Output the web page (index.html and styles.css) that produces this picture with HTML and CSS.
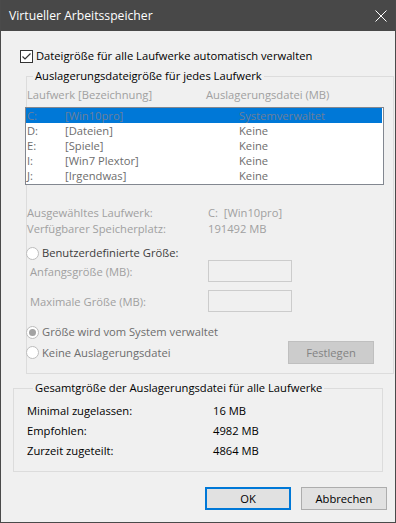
FILE: index.html
```html
<!DOCTYPE html>
<html lang="de">
<head>
<meta charset="UTF-8">
<title>Virtueller Arbeitsspeicher</title>
<link rel="stylesheet" href="styles.css">
</head>
<body>

<div class="window">
  <div class="titlebar">
    <span>Virtueller Arbeitsspeicher</span>
    <svg class="close" width="12" height="12" viewBox="0 0 12 12">
      <path d="M0.5 0.5 L11.5 11.5 M11.5 0.5 L0.5 11.5" stroke="#ffffff" stroke-width="1" fill="none"/>
    </svg>
  </div>

  <div class="content">
    <div class="check">
      <svg class="box" width="13" height="13" viewBox="0 0 13 13">
        <rect x="0.5" y="0.5" width="12" height="12" fill="#ffffff" stroke="#333333"/>
        <path d="M2.5 6.5 L5 9 L10.5 3.5" stroke="#333333" stroke-width="1.2" fill="none"/>
      </svg>
      <span>Dateigröße für alle Laufwerke automatisch verwalten</span>
    </div>

    <fieldset class="group paging">
      <legend>Auslagerungsdateigröße für jedes Laufwerk</legend>

      <div class="list-head">
        <span>Laufwerk [Bezeichnung]</span>
        <span>Auslagerungsdatei (MB)</span>
      </div>

      <div class="list">
        <div class="row sel"><span>C:</span><span>[Win10pro]</span><span>Systemverwaltet</span></div>
        <div class="row"><span>D:</span><span>[Dateien]</span><span>Keine</span></div>
        <div class="row"><span>E:</span><span>[Spiele]</span><span>Keine</span></div>
        <div class="row"><span>I:</span><span>[Win7 Plextor]</span><span>Keine</span></div>
        <div class="row"><span>J:</span><span>[Irgendwas]</span><span>Keine</span></div>
      </div>

      <div class="info">
        <span>Ausgewähltes Laufwerk:</span><span>C:&nbsp; [Win10pro]</span>
        <span>Verfügbarer Speicherplatz:</span><span>191492 MB</span>
      </div>

      <div class="radio custom">
        <svg width="13" height="13" viewBox="0 0 13 13">
          <circle cx="6.5" cy="6.5" r="6" fill="#ffffff" stroke="#bcbcbc"/>
        </svg>
        <span>Benutzerdefinierte Größe:</span>
      </div>

      <div class="sizes">
        <span>Anfangsgröße (MB):</span><div class="field"></div>
        <span>Maximale Größe (MB):</span><div class="field"></div>
      </div>

      <div class="radio system">
        <svg width="13" height="13" viewBox="0 0 13 13">
          <circle cx="6.5" cy="6.5" r="6" fill="#ffffff" stroke="#bcbcbc"/>
          <circle cx="6.5" cy="6.5" r="3.5" fill="#a3a3a3"/>
        </svg>
        <span>Größe wird vom System verwaltet</span>
      </div>

      <div class="last-row">
        <div class="radio">
          <svg width="13" height="13" viewBox="0 0 13 13">
            <circle cx="6.5" cy="6.5" r="6" fill="#ffffff" stroke="#bcbcbc"/>
          </svg>
          <span>Keine Auslagerungsdatei</span>
        </div>
        <div class="btn disabled">Festlegen</div>
      </div>
    </fieldset>

    <fieldset class="group total">
      <legend>Gesamtgröße der Auslagerungsdatei für alle Laufwerke</legend>
      <div class="totals">
        <span>Minimal zugelassen:</span><span>16 MB</span>
        <span>Empfohlen:</span><span>4982 MB</span>
        <span>Zurzeit zugeteilt:</span><span>4864 MB</span>
      </div>
    </fieldset>

    <div class="buttons">
      <div class="btn default">OK</div>
      <div class="btn">Abbrechen</div>
    </div>
  </div>
</div>

</body>
</html>
```

FILE: styles.css
```css
body {
	margin: 0;
	padding: 0;
	font-family: "Open Sans", "Liberation Sans", sans-serif;
	font-size: 11.2px;
	color: #000000;
	background: #f0f0f0;
}

.window {
	width: 396px;
	height: 523px;
	box-sizing: border-box;
	border: 1px solid #4a4a4a;
	border-top: none;
	background: #f0f0f0;
	display: flex;
	flex-direction: column;
}

/* title bar */
.titlebar {
	height: 31px;
	flex: none;
	background: #484848;
	color: #ffffff;
	font-size: 12.2px;
	display: flex;
	align-items: center;
	justify-content: space-between;
	padding: 0 8px;
}

.close {
	display: block;
}

.content {
	display: flex;
	flex-direction: column;
}

/* checkbox */
.check {
	height: 16px;
	margin: 17px 0 0 19px;
	display: flex;
	align-items: center;
	gap: 3px;
	line-height: 16px;
}

.check .box {
	display: block;
}

/* group boxes */
.group {
	margin: 0;
	min-width: 0;
	box-sizing: border-box;
	border: 1px solid #dcdcdc;
}

.group legend {
	margin-left: 6px;
	padding: 0 2px;
	line-height: 16px;
}

.paging {
	width: 368px;
	margin: 4px 0 0 25px;
	padding: 0 0 9px 0;
}

.total {
	width: 370px;
	margin: 6px 0 0 12px;
	padding: 5px 0 10px 13px;
}

/* drive list */
.list-head {
	margin-top: 3px;
	display: grid;
	grid-template-columns: 179px 1fr;
	line-height: 16px;
	color: #a0a0a0;
}

.list {
	width: 359px;
	margin: 4px 0 0 -2px;
	box-sizing: border-box;
	border: 1px solid #828790;
	background: #ffffff;
	padding-bottom: 1px;
}

.row {
	display: grid;
	grid-template-columns: 38px 174px 1fr;
	height: 15px;
	line-height: 15px;
	padding-left: 1px;
	color: #6d6d6d;
}

.row.sel {
	background: #0078d7;
	margin-right: 1px;
	color: #6b7f99;
}

.info {
	margin-top: 20px;
	display: grid;
	grid-template-columns: 181px 1fr;
	line-height: 16px;
	color: #a0a0a0;
}

/* radio buttons */
.radio {
	height: 14px;
	display: flex;
	align-items: center;
	gap: 3px;
	margin-left: -1px;
	line-height: 14px;
	color: #6d6d6d;
}

.radio svg {
	display: block;
	flex: none;
}

.radio.custom {
	margin-top: 9px;
	color: #3c3c3c;
}

.radio.system {
	margin-top: 13px;
}

.sizes {
	display: grid;
	grid-template-columns: 181px 84px;
	grid-auto-rows: 22px;
	row-gap: 8px;
	align-items: center;
	color: #a0a0a0;
}

.sizes span {
	padding-left: 3px;
}

.field {
	height: 22px;
	box-sizing: border-box;
	border: 1px solid #cccccc;
	background: #f0f0f0;
}

.last-row {
	margin-top: 2px;
	height: 23px;
	display: flex;
	align-items: center;
	justify-content: space-between;
	padding-right: 19px;
}

/* buttons */
.btn {
	width: 86px;
	height: 23px;
	box-sizing: border-box;
	border: 1px solid #adadad;
	background: #e1e1e1;
	display: flex;
	align-items: center;
	justify-content: center;
	cursor: default;
}

.btn.default {
	border: 2px solid #0078d7;
}

.btn.disabled {
	border-color: #bfbfbf;
	background: #cccccc;
	color: #838383;
}

.totals {
	display: grid;
	grid-template-columns: 186px 1fr;
	grid-auto-rows: 20px;
	line-height: 20px;
}

.buttons {
	margin-top: 15px;
	display: flex;
	justify-content: flex-end;
	gap: 10px;
	padding-right: 8px;
}
```
